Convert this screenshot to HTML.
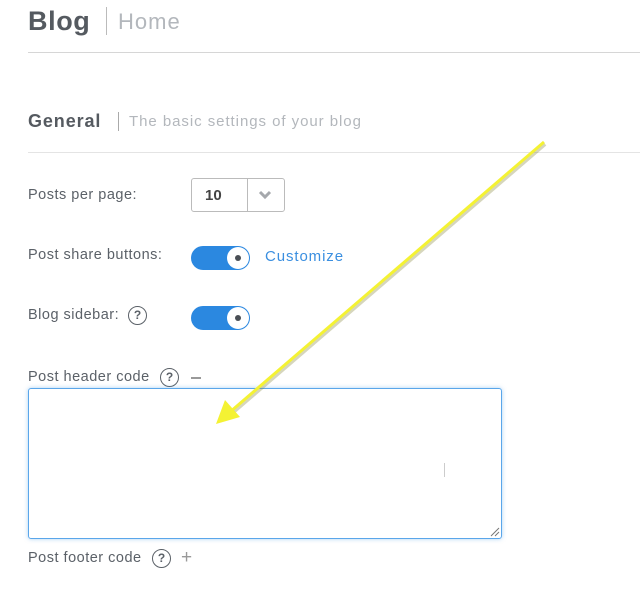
<!DOCTYPE html>
<html><head><style>
*{margin:0;padding:0;box-sizing:border-box}
body{width:640px;height:607px;background:#fff;font-family:"Liberation Sans",sans-serif;position:relative;overflow:hidden;color:#555a60}
.a{position:absolute;white-space:nowrap}
.lbl{font-size:14.5px;color:#5b6168;letter-spacing:.5px}
.q{position:absolute;width:19px;height:19px;border:1.5px solid #5b6168;border-radius:50%;font-size:12px;font-weight:bold;text-align:center;line-height:16px;color:#5b6168}
.tg{position:absolute;width:59px;height:24px;border-radius:12px;background:#2b88e0}
.tg:after{content:"";position:absolute;right:1px;top:1px;width:22px;height:22px;border-radius:50%;background:#fff}
.tg:before{content:"";position:absolute;right:9px;top:9px;width:6px;height:6px;border-radius:50%;background:#4a4f55;z-index:2}
</style></head><body>
<div class="a" style="left:28px;top:6px;font-size:27px;font-weight:bold;color:#555a60;letter-spacing:.6px">Blog</div>
<div class="a" style="left:106px;top:7px;width:1px;height:28px;background:#bbb"></div>
<div class="a" style="left:118px;top:9px;font-size:22px;color:#b3b7bc;letter-spacing:1px">Home</div>
<div class="a" style="left:28px;top:52px;width:612px;height:1px;background:#d6d6d6"></div>
<div class="a" style="left:28px;top:111px;font-size:18px;font-weight:bold;color:#555a60;letter-spacing:.9px">General</div>
<div class="a" style="left:118px;top:112px;width:1px;height:19px;background:#aaa"></div>
<div class="a" style="left:129px;top:113px;font-size:15px;color:#b3b7bc;letter-spacing:.95px">The basic settings of your blog</div>
<div class="a" style="left:28px;top:152px;width:612px;height:1px;background:#e4e4e4"></div>

<div class="a lbl" style="left:28px;top:187px">Posts per page:</div>
<div class="a" style="left:191px;top:178px;width:94px;height:34px;border:1px solid #bbb;border-radius:3px"></div>
<div class="a" style="left:247px;top:179px;width:1px;height:32px;background:#bbb"></div>
<div class="a" style="left:205px;top:187px;font-size:15px;font-weight:bold;color:#444">10</div>
<svg class="a" style="left:258px;top:190px" width="14" height="10"><path d="M2 2 L7 7 L12 2" stroke="#a5a8ac" stroke-width="3" fill="none"/></svg>

<div class="a lbl" style="left:28px;top:247px">Post share buttons:</div>
<div class="tg" style="left:191px;top:246px"></div>
<div class="a" style="left:265px;top:248px;font-size:15px;color:#3b8fe0;letter-spacing:.9px">Customize</div>

<div class="a lbl" style="left:28px;top:307px">Blog sidebar:</div>
<div class="q" style="left:128px;top:306px">?</div>
<div class="tg" style="left:191px;top:306px"></div>

<div class="a lbl" style="left:28px;top:369px">Post header code</div>
<div class="q" style="left:160px;top:368px">?</div>
<div class="a" style="left:191px;top:377px;width:10px;height:2px;background:#999"></div>

<div class="a" style="left:28px;top:388px;width:474px;height:151px;border:1px solid #5aa6ea;border-radius:3px;box-shadow:0 0 4px rgba(90,166,234,.5)"></div>
<svg class="a" style="left:490px;top:527px" width="10" height="10"><path d="M1 9L9 1M5 9L9 5" stroke="#777" stroke-width="1"/></svg>
<div class="a" style="left:444px;top:463px;width:1px;height:14px;background:#ccc"></div>

<div class="a lbl" style="left:28px;top:550px">Post footer code</div>
<div class="q" style="left:152px;top:549px">?</div>
<div class="a" style="left:181px;top:547px;font-size:19px;color:#999">+</div>

<svg class="a" style="left:0;top:0" width="640" height="607">
<path d="M544 142 L230 412" stroke="#8a8a40" stroke-opacity=".35" stroke-width="4" transform="translate(1,2)"/>
<path d="M544 142 L230 412" stroke="#f4f233" stroke-width="3"/>
<path d="M216 424 L225 400 L240 417 Z" fill="#f4f233"/>
</svg>
</body></html>
